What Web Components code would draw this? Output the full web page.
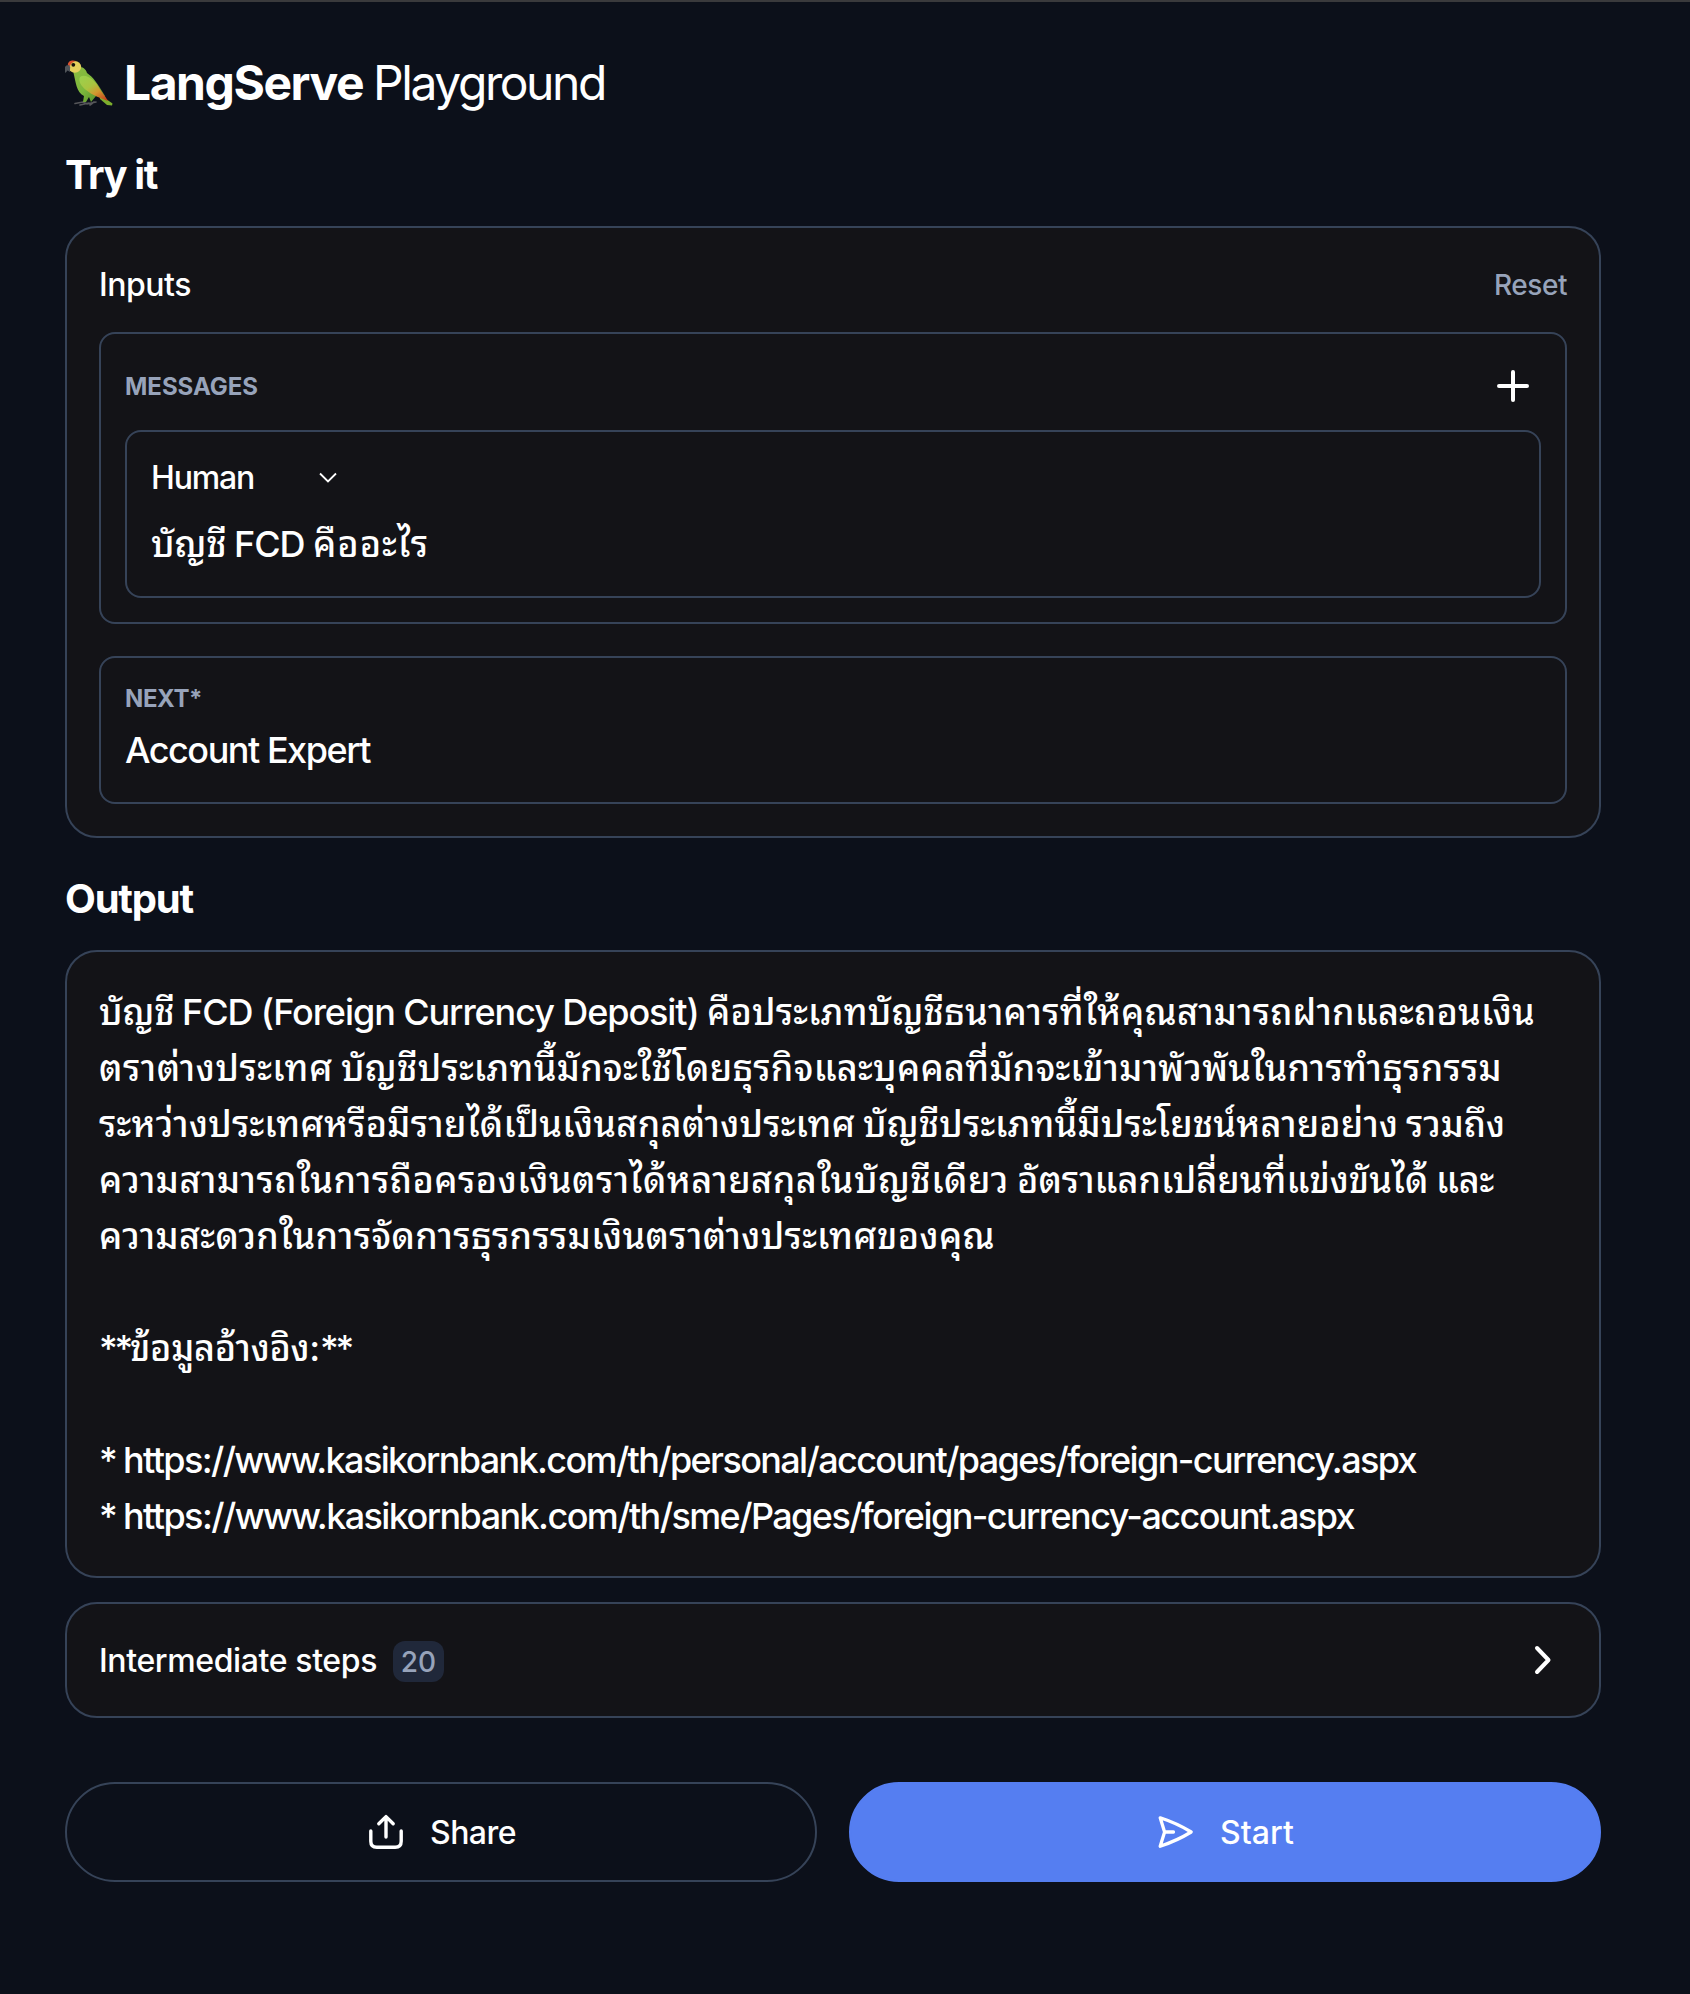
<!DOCTYPE html>
<html lang="th">
<head>
<meta charset="utf-8">
<title>LangServe Playground</title>
<style>
html,body{margin:0;background:#0c101a}
body{font-family:Inter,"Noto Sans Thai Looped","Noto Looped Thai","Loma","Noto Sans Thai","Noto Sans",sans-serif;color:#fff;-webkit-font-smoothing:antialiased}
</style>
</head>
<body>
<playground-app></playground-app>
<script>
const define = (name, html, ready) => customElements.define(name, class extends HTMLElement {
  constructor() {
    super();
    this.attachShadow({ mode: 'open' }).innerHTML = html;
  }
  connectedCallback() { if (ready) ready(this); }
});

/* A run of text tracked to fill a given advance width. */
define('fit-run', `<style>:host{display:inline-block;white-space:pre;vertical-align:top}:host([th]){word-spacing:-2px;font-weight:500}span{display:inline-block;white-space:pre}</style><span><slot></slot></span>`, el => {
  const w = +el.getAttribute('w');
  el.style.width = w + 'px';
  const s = el.shadowRoot.querySelector('span');
  const n = [...new Intl.Segmenter('th', { granularity: 'grapheme' }).segment(el.textContent)].length;
  s.style.letterSpacing = ((w - s.getBoundingClientRect().width) / n) + 'px';
});

define('section-title', `<style>:host{display:block;box-sizing:border-box;height:56px;padding-top:1px;font-size:40px;line-height:56px;font-weight:650}</style><slot></slot>`);

define('ui-panel', `<style>:host{display:flex;flex-direction:column;box-sizing:border-box;border:2px solid #364358;border-radius:32px;padding:32px;background:#131317}</style><slot></slot>`);

define('field-box', `<style>:host{display:flex;flex-direction:column;box-sizing:border-box;border:2px solid #364358;border-radius:16px;padding:24px}</style><slot></slot>`);

define('field-label', `<style>:host{display:block;box-sizing:border-box;height:32px;padding-top:1px;font-size:24px;line-height:32px;font-weight:650;color:#97a3ba}</style><slot></slot>`);

define('count-badge', `<style>:host{display:flex;align-items:center;justify-content:center;box-sizing:border-box;width:51px;height:41px;padding-top:2px;border-radius:12px;background:#20283a;color:#97a3ba;font-size:28px;font-weight:500}</style><slot></slot>`);

define('pill-button', `<style>:host{display:flex;flex:1;align-items:center;justify-content:center;box-sizing:border-box;height:100px;border:2px solid #364358;border-radius:50px;font-size:32px;line-height:40px;font-weight:550;gap:26px;padding-left:2px}:host([primary]){background:#557ef1;border-color:#557ef1}.t{padding-top:2px}</style><slot name="icon"></slot><div class="t"><slot></slot></div>`);

define('parrot-icon', `<style>:host{display:block;width:50px;height:54px}svg{display:block}</style>
<svg width="50" height="54" viewBox="0 0 50 54">
<defs>
<linearGradient id="b" x1="0" y1="0" x2="1" y2="1"><stop offset="0" stop-color="#8dbb40"/><stop offset=".5" stop-color="#7cb83c"/><stop offset="1" stop-color="#4f8426"/></linearGradient>
<linearGradient id="w" x1=".1" y1="0" x2=".9" y2="1"><stop offset="0" stop-color="#9bd04c"/><stop offset=".4" stop-color="#a9c440"/><stop offset=".65" stop-color="#d3982f"/><stop offset="1" stop-color="#c43d1c"/></linearGradient>
</defs>
<path d="M10 43.500 L18 42 L22 44 L31 42 M15 45 L24 43 M25 45 L29 42" stroke="#56565a" stroke-width="1.600" fill="none" stroke-linecap="round"/>
<path d="M34 34 L47.500 43.500 L47 45.500 L42 45 L35 39Z" fill="#7cae2d"/>
<path d="M8 11 C9 5 20 5 22 13 C28 17 33 24 40 36 C37 37 34 37 31 36 L26 42 L24 37 L21 42 L18 42 L19 36 C11 32 11 22 8 11Z" fill="url(#b)"/>
<path d="M15 17 C21 13 29 20 33 26 C37 33 41 37 43 41 C35 38 27 35 21 30 C16 26 13 21 15 17Z" fill="url(#w)"/>
<ellipse cx="9.800" cy="6.800" rx="6.400" ry="5.900" fill="#e5d05c"/>
<path d="M3 6 C2 1 7 -.5 11 1 C8 2 6 3 5 6Z" fill="#db5330"/>
<circle cx="8.300" cy="4.800" r="1.900" fill="#17120c"/>
<path d="M4 5 C-1 5 -1 9 .4 13 L2.600 10.500 L4.800 12 L5.200 7Z" fill="#505459"/>
</svg>`);

define('plus-icon', `<style>:host{display:block;width:56px;height:56px}svg{display:block}</style><svg width="56" height="56" viewBox="0 0 56 56"><path d="M28 14V42M14 28H42" stroke="#fff" stroke-width="4" stroke-linecap="round"/></svg>`);
define('caret-icon', `<style>:host{display:block;width:18px;height:12px}svg{display:block}</style><svg width="18" height="12" viewBox="0 0 18 12"><path d="M1 1.500L9 9.500L17 1.500" fill="none" stroke="#fff" stroke-width="1.800"/></svg>`);
define('chevron-icon', `<style>:host{display:block;width:20px;height:32px}svg{display:block}</style><svg width="20" height="32" viewBox="0 0 20 32"><path d="M4 4L15.500 16L4 28" fill="none" stroke="#fff" stroke-width="4" stroke-linecap="round" stroke-linejoin="round"/></svg>`);
define('share-icon', `<style>:host{display:block;width:36px;height:36px}svg{display:block}</style><svg width="36" height="36" viewBox="0 0 36 36"><path d="M2.800 17V27.200Q2.800 33.200 8.800 33.200H27.200Q33.200 33.200 33.200 27.200V17M18 23V3M10.800 9.800L18 2.600L25.200 9.800" fill="none" stroke="#fff" stroke-width="3.400" stroke-linecap="round" stroke-linejoin="round"/></svg>`);
define('send-icon', `<style>:host{display:block;width:36px;height:36px}svg{display:block}</style><svg width="36" height="36" viewBox="0 0 36 36"><path d="M6.600 18L2.200 3.800Q19 9.300 33.200 18Q19 26.700 2.200 32.200ZM6.600 18H15.500" fill="none" stroke="#fff" stroke-width="3.300" stroke-linecap="round" stroke-linejoin="round"/></svg>`);

define('playground-app', `<style>
:host{display:flex;flex-direction:column;box-sizing:border-box;height:1994px;border-top:2px solid #3a3a3c;padding:49px 89px 0 65px;background:#0c101a}
h1{margin:0;display:flex;font-size:48px;line-height:64px;font-weight:430;padding-bottom:31px}
h1 parrot-icon{margin:9px 9px 0 0}
b{font-weight:750}
.row{display:flex;justify-content:space-between;align-items:center}
.inputs{margin:24px 0 32px}
.head{box-sizing:border-box;height:48px;padding-top:2px;margin-bottom:24px;font-size:32px;font-weight:550;line-height:48px}
.reset{font-size:28px;font-weight:450;color:#97a3ba;padding-bottom:1px}
.next{margin-top:32px}
.mh{height:56px;margin-bottom:16px}
.human{display:flex;align-items:center;height:44px;line-height:44px;font-size:32px;font-weight:450;margin-bottom:16px;gap:65px}
.txt{font-size:36px;font-weight:450;line-height:56px;height:56px;white-space:nowrap;display:flex}
field-label+.txt{margin-top:8px}
.out{margin:24px 0}
.steps{height:116px;justify-content:center;font-size:32px;font-weight:550}
.steps .l{display:flex;align-items:center;gap:16px}
.steps fit-run{padding-top:1px}
.steps count-badge{margin-top:2px}
.steps chevron-icon{margin-right:14px}
.btns{display:flex;gap:32px;margin-top:64px}
</style>
<h1><parrot-icon></parrot-icon><fit-run w="249"><b>LangServe </b></fit-run><fit-run w="232">Playground</fit-run></h1>
<section-title><fit-run w="92">Try it</fit-run></section-title>
<ui-panel class="inputs">
  <div class="row head"><fit-run w="92">Inputs</fit-run><span class="reset"><fit-run w="73">Reset</fit-run></span></div>
  <field-box>
    <div class="row mh"><field-label><fit-run w="133">MESSAGES</fit-run></field-label><plus-icon></plus-icon></div>
    <field-box>
      <div class="human"><fit-run w="103">Human</fit-run><caret-icon></caret-icon></div>
      <div class="txt"><fit-run th w="83">บัญชี </fit-run><fit-run w="79">FCD </fit-run><fit-run th w="116">คืออะไร</fit-run></div>
    </field-box>
  </field-box>
  <field-box class="next">
    <field-label><fit-run w="77">NEXT*</fit-run></field-label>
    <div class="txt"><fit-run w="245">Account Expert</fit-run></div>
  </field-box>
</ui-panel>
<section-title><fit-run w="128">Output</fit-run></section-title>
<ui-panel class="out">
  <div class="txt"><fit-run th w="83">บัญชี </fit-run><fit-run w="525">FCD (Foreign Currency Deposit) </fit-run><fit-run th w="828">คือประเภทบัญชีธนาคารที่ให้คุณสามารถฝากและถอนเงิน</fit-run></div>
  <div class="txt"><fit-run th w="242">ตราต่างประเทศ </fit-run><fit-run th w="1161">บัญชีประเภทนี้มักจะใช้โดยธุรกิจและบุคคลที่มักจะเข้ามาพัวพันในการทำธุรกรรม</fit-run></div>
  <div class="txt"><fit-run th w="764">ระหว่างประเทศหรือมีรายได้เป็นเงินสกุลต่างประเทศ </fit-run><fit-run th w="543">บัญชีประเภทนี้มีประโยชน์หลายอย่าง </fit-run><fit-run th w="99">รวมถึง</fit-run></div>
  <div class="txt"><fit-run th w="918">ความสามารถในการถือครองเงินตราได้หลายสกุลในบัญชีเดียว </fit-run><fit-run th w="419">อัตราแลกเปลี่ยนที่แข่งขันได้ </fit-run><fit-run th w="58">และ</fit-run></div>
  <div class="txt"><fit-run th w="896">ความสะดวกในการจัดการธุรกรรมเงินตราต่างประเทศของคุณ</fit-run></div>
  <div class="txt"></div>
  <div class="txt"><fit-run w="31">**</fit-run><fit-run th w="190">ข้อมูลอ้างอิง:</fit-run><fit-run w="31">**</fit-run></div>
  <div class="txt"></div>
  <div class="txt"><fit-run w="24">* </fit-run><fit-run w="1293">https://www.kasikornbank.com/th/personal/account/pages/foreign-currency.aspx</fit-run></div>
  <div class="txt"><fit-run w="24">* </fit-run><fit-run w="1231">https://www.kasikornbank.com/th/sme/Pages/foreign-currency-account.aspx</fit-run></div>
</ui-panel>
<ui-panel class="steps"><div class="row"><div class="l"><fit-run w="278">Intermediate steps</fit-run><count-badge>20</count-badge></div><chevron-icon></chevron-icon></div></ui-panel>
<div class="btns">
  <pill-button><share-icon slot="icon"></share-icon><fit-run w="86">Share</fit-run></pill-button>
  <pill-button primary><send-icon slot="icon"></send-icon><fit-run w="74">Start</fit-run></pill-button>
</div>`);
</script>
</body>
</html>
